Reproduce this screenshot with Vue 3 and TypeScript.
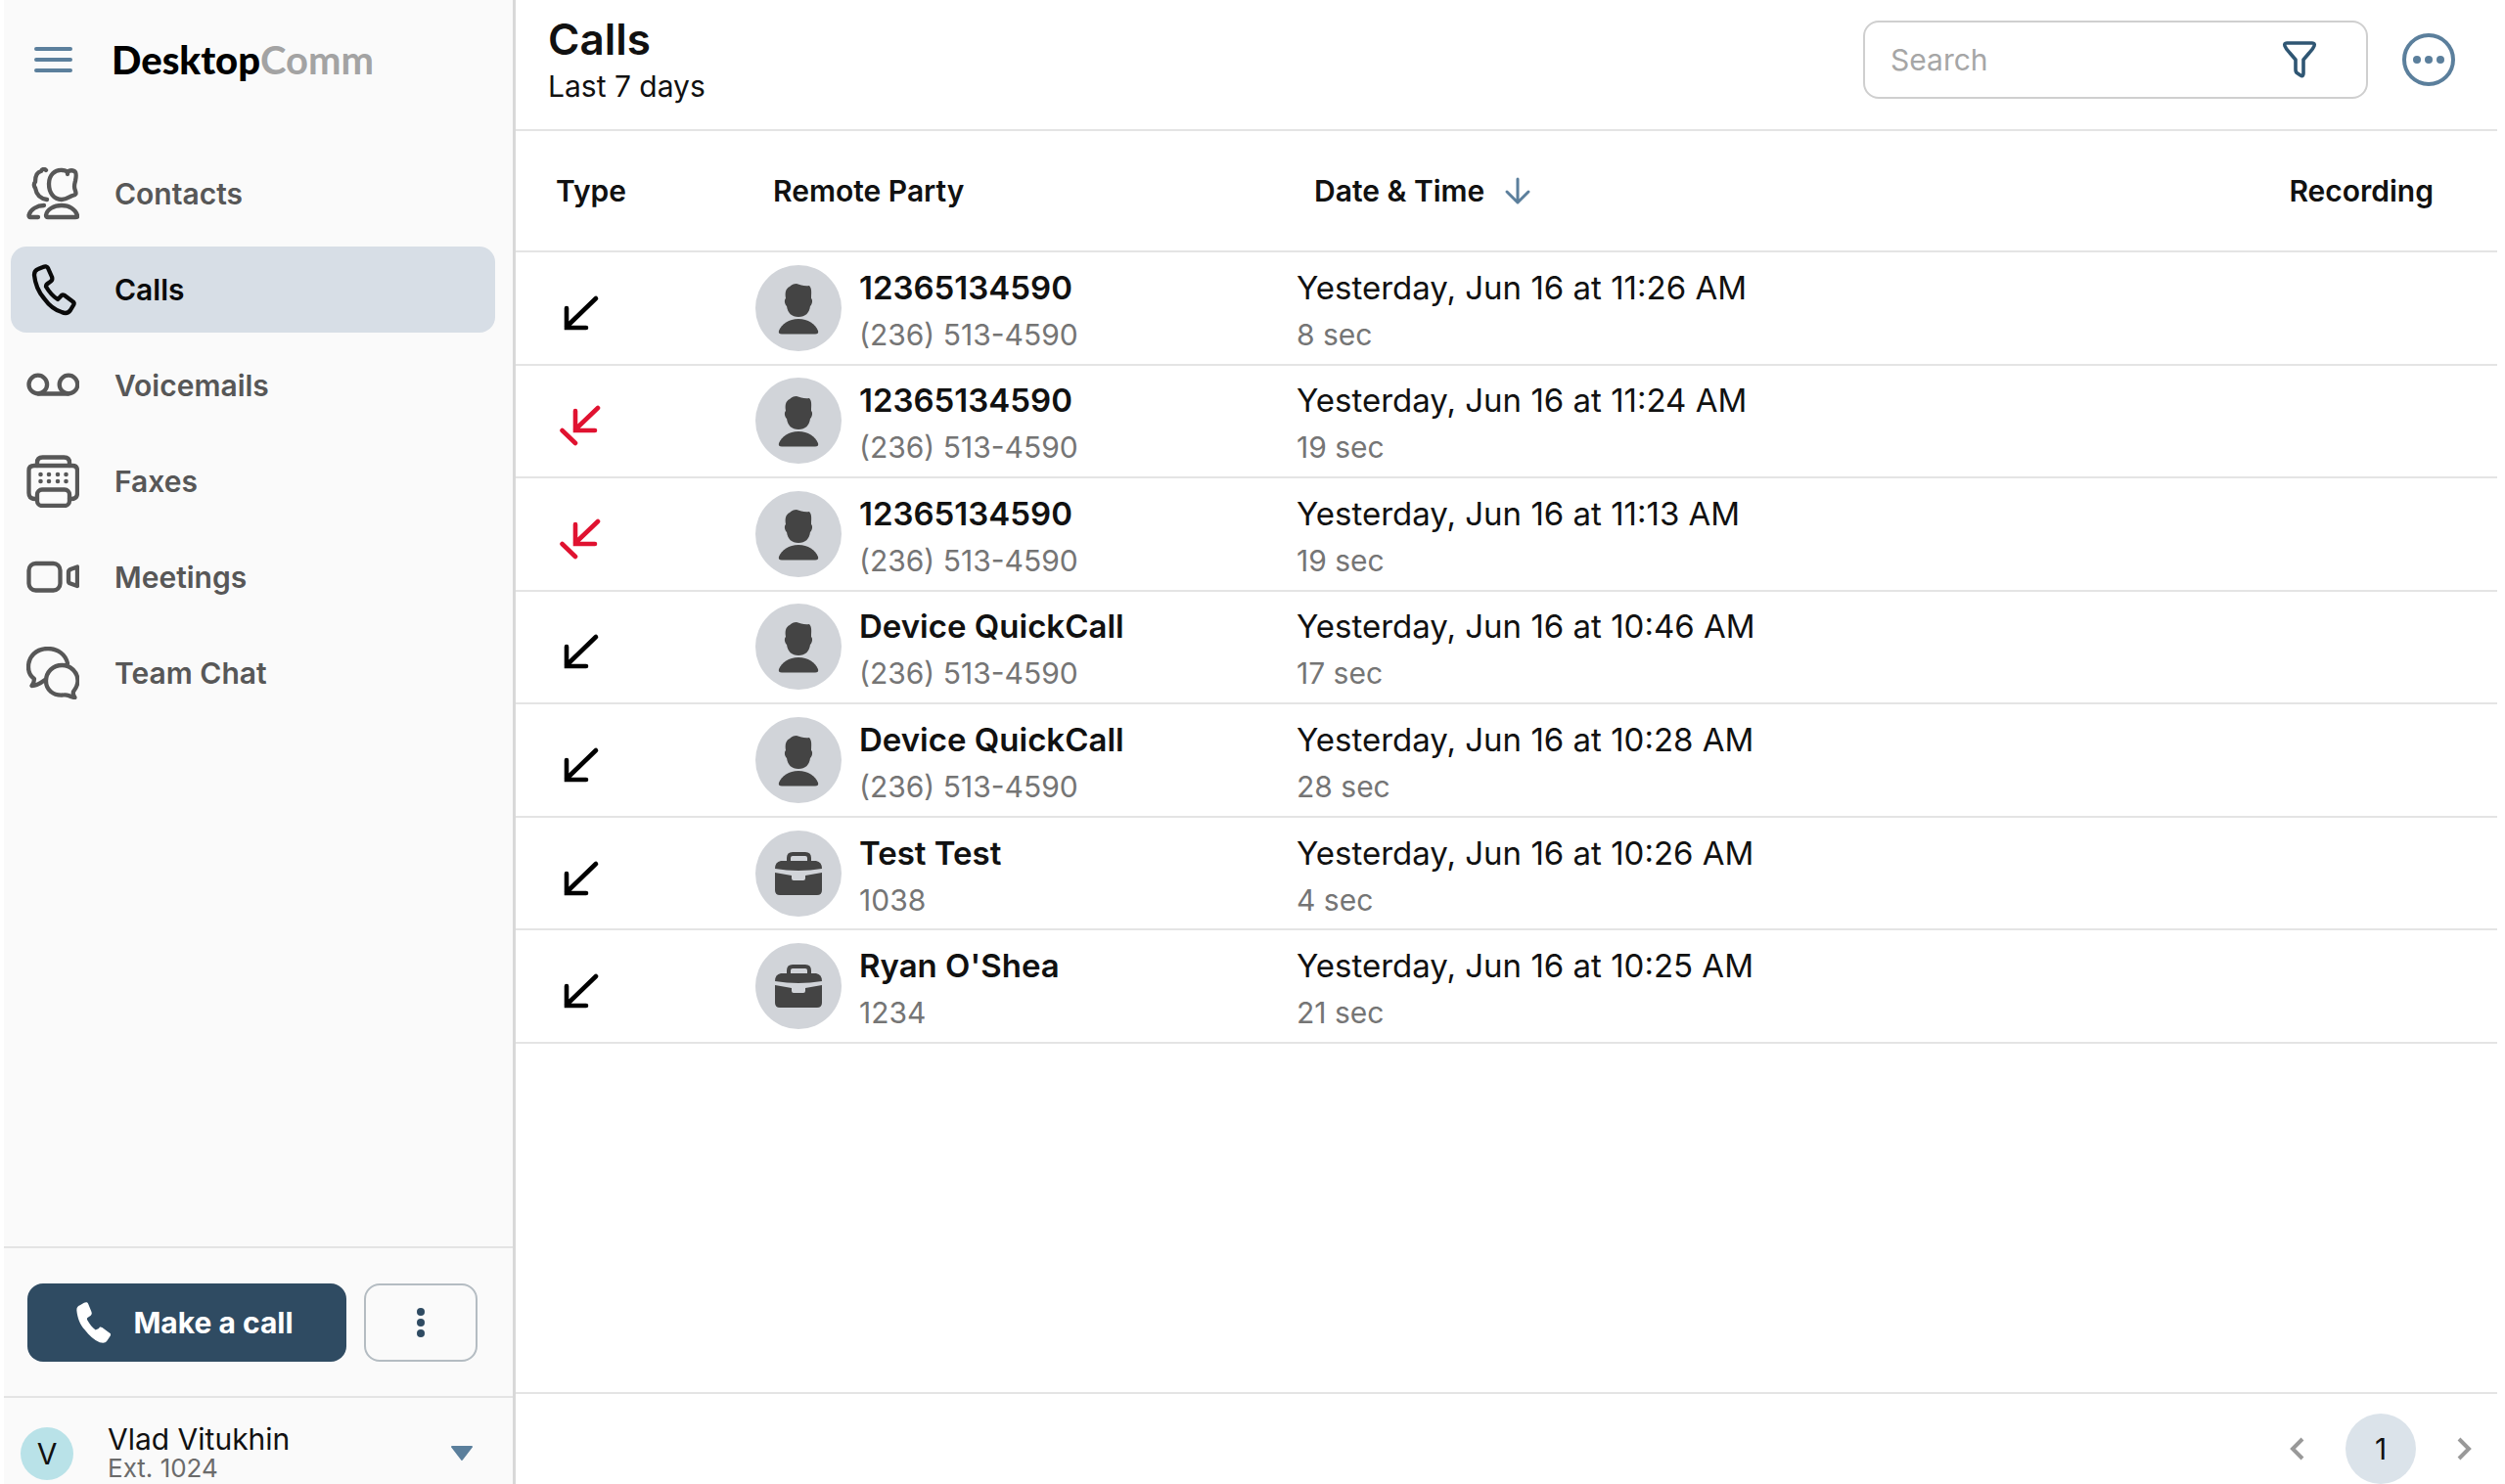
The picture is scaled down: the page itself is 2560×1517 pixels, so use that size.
<script setup lang="ts">
import { ref } from 'vue'

type Icon = 'contacts' | 'calls' | 'voicemails' | 'faxes' | 'meetings' | 'chat'

interface NavItem {
  icon: Icon
  label: string
}

interface Call {
  missed: boolean
  kind: 'person' | 'business'
  name: string
  number: string
  date: string
  duration: string
}

const nav: NavItem[] = [
  { icon: 'contacts', label: 'Contacts' },
  { icon: 'calls', label: 'Calls' },
  { icon: 'voicemails', label: 'Voicemails' },
  { icon: 'faxes', label: 'Faxes' },
  { icon: 'meetings', label: 'Meetings' },
  { icon: 'chat', label: 'Team Chat' },
]

const active = ref<Icon>('calls')
const query = ref('')

const calls: Call[] = [
  { missed: false, kind: 'person', name: '12365134590', number: '(236) 513-4590', date: 'Yesterday, Jun 16 at 11:26 AM', duration: '8 sec' },
  { missed: true, kind: 'person', name: '12365134590', number: '(236) 513-4590', date: 'Yesterday, Jun 16 at 11:24 AM', duration: '19 sec' },
  { missed: true, kind: 'person', name: '12365134590', number: '(236) 513-4590', date: 'Yesterday, Jun 16 at 11:13 AM', duration: '19 sec' },
  { missed: false, kind: 'person', name: 'Device QuickCall', number: '(236) 513-4590', date: 'Yesterday, Jun 16 at 10:46 AM', duration: '17 sec' },
  { missed: false, kind: 'person', name: 'Device QuickCall', number: '(236) 513-4590', date: 'Yesterday, Jun 16 at 10:28 AM', duration: '28 sec' },
  { missed: false, kind: 'business', name: 'Test Test', number: '1038', date: 'Yesterday, Jun 16 at 10:26 AM', duration: '4 sec' },
  { missed: false, kind: 'business', name: "Ryan O'Shea", number: '1234', date: 'Yesterday, Jun 16 at 10:25 AM', duration: '21 sec' },
]
</script>

<template>
  <div class="app">
    <aside class="sidebar">
      <div class="brand">
        <button class="bare" type="button" aria-label="Toggle menu">
          <svg width="42" height="28" viewBox="0 0 42 28" fill="none" stroke="#5b7f9c" stroke-width="4" stroke-linecap="round">
            <path d="M3 3H38M3 14H38M3 25H38" />
          </svg>
        </button>
        <span class="logo">Desktop<span class="logo-light">Comm</span></span>
      </div>

      <nav class="nav">
        <a
          v-for="item in nav"
          :key="item.icon"
          href="#"
          class="nav-item"
          :class="{ active: active === item.icon }"
          @click.prevent="active = item.icon"
        >
          <svg class="nav-icon" viewBox="0 0 54 54" fill="none" stroke="currentColor" stroke-width="4.300" stroke-linecap="round" stroke-linejoin="round">
            <template v-if="item.icon === 'contacts'">
              <path d="M37 3C29 2 23 8 23 17C23 26 28 33 36 33C41 33 44 30 47 29C51 28 51 27 50 24C48 20 49 18 50 14C51 9 51 5 49 4C47 3 44 3 42 5C41 4 39 3 37 3Z" />
              <path d="M42 5V7" />
              <path d="M20 3C18 1 16 2 15 4C10 5 9 9 9 15C7 17 8 20 9 21C10 27 14 32 21 33" />
              <path d="M18 39C11 39 4 43 2.500 49C2.500 51 3 51 4 51H12" />
              <path d="M36 39C28 39 21 43 20 49C20 51 21 51 22 51H50C52 51 52.500 51 52 49C50 43 44 39 36 39Z" />
            </template>
            <path
              v-else-if="item.icon === 'calls'"
              d="M17 4L12 6C9 7 8 9 8 12C9 22 12 29 18 36C23 43 29 48 36 50C40 52 43 51 45 48L48 43C49 41 49 40 47 39L39 33C37 32 36 32 35 34L32 37C27 34 23 29 20 24C20 22 21 21 23 20C26 18 27 17 26 14L22 5C21 3 19 3 17 4Z"
            />
            <template v-else-if="item.icon === 'voicemails'">
              <circle cx="11.800" cy="26" r="9.300" />
              <circle cx="43" cy="26" r="9.300" />
              <path d="M11.800 35.500H43" />
            </template>
            <template v-else-if="item.icon === 'faxes'">
              <path d="M11 11V8Q11 2.500 16.500 2.500H38.500Q44 2.500 44 8V11" />
              <path d="M11 45H9Q2.500 45 2.500 39V16Q2.500 11 8 11H47Q52 11 52 16V39Q52 45 46 45H44" />
              <rect x="11" y="35.500" width="33" height="16.500" rx="5" />
              <path d="M14.500 20V20M23 20V20M32 20V20M40.500 20V20M14.500 27V27M23 27V27M32 27V27M40.500 27V27" stroke-width="4.600" />
            </template>
            <template v-else-if="item.icon === 'meetings'">
              <rect x="2.500" y="13" width="32" height="27.500" rx="7" />
              <path d="M43 22Q43 20 45 19L52 16.500V36L45 33.500Q43 33 43 31Z" />
            </template>
            <template v-else>
              <path d="M42 17C40 8 32 2 22 2C10 2 2 10 2 21C2 27 4 30 8 33C8 36 7 38 5.500 40C10 40 15 37 19 34" />
              <path d="M48 46C51 42 52.500 39 52.500 35C52.500 26 45 19 36.500 19C27 19 20 26 20 35C20 44 27 50 37 49.500C40 49 41 49 43 50C45 51 47 52 49.500 52C48 50 47.500 48 48 46Z" />
            </template>
          </svg>
          <span>{{ item.label }}</span>
        </a>
      </nav>

      <div class="dial">
        <button class="make-call" type="button">
          <svg width="36" height="42" viewBox="8 2 42 50" fill="currentColor">
            <path d="M17 3L12 6C9 7 8 9 8 12C9 22 12 29 18 36C23 43 29 48 36 51C40 52 43 52 45 49L49 43C50 41 49 40 47 39L39 33C37 32 36 32 35 34L31 36C27 33 24 29 21 24C20 22 21 21 23 20C26 18 27 17 26 14L22 4C21 2 19 2 17 3Z" />
          </svg>
          <span>Make a call</span>
        </button>
        <button class="dial-more" type="button" aria-label="More call options">
          <svg width="10" height="32" viewBox="0 0 10 32" fill="#2f4b62">
            <circle cx="5" cy="5" r="4" />
            <circle cx="5" cy="16" r="4" />
            <circle cx="5" cy="27" r="4" />
          </svg>
        </button>
      </div>

      <button class="account" type="button">
        <span class="initial">V</span>
        <span class="account-text">
          <span class="account-name">Vlad Vitukhin</span>
          <span class="account-ext">Ext. 1024</span>
        </span>
        <svg width="24" height="18" viewBox="0 0 24 18" fill="#5b7f9c" stroke="#5b7f9c" stroke-width="2" stroke-linejoin="round">
          <path d="M2 2H22L12 15Z" />
        </svg>
      </button>
    </aside>

    <main class="main">
      <header class="topbar">
        <div class="heading">
          <h1>Calls</h1>
          <p>Last 7 days</p>
        </div>
        <div class="search">
          <input v-model="query" type="search" placeholder="Search" aria-label="Search calls" />
          <button class="bare" type="button" aria-label="Filter">
            <svg width="36" height="40" viewBox="0 0 36 40" fill="none" stroke="#2f5673" stroke-width="3.600" stroke-linejoin="round">
              <path d="M5 3H31Q34 3 33 6Q32 9 28 13L22 20V34Q22 38 19 36L16 34Q14 33 14 30V20L8 13Q4 9 3 6Q2 3 5 3Z" />
            </svg>
          </button>
        </div>
        <button class="bare" type="button" aria-label="More options">
          <svg width="56" height="56" viewBox="0 0 56 56" fill="none">
            <circle cx="28" cy="28" r="25" stroke="#5b7f9c" stroke-width="4" />
            <g fill="#5b7f9c">
              <circle cx="16" cy="28" r="4" />
              <circle cx="28" cy="28" r="4" />
              <circle cx="40" cy="28" r="4" />
            </g>
          </svg>
        </button>
      </header>

      <table class="calls">
        <colgroup>
          <col class="col-type" />
          <col class="col-party" />
          <col />
          <col class="col-rec" />
        </colgroup>
        <thead>
          <tr>
            <th class="th-type" scope="col">Type</th>
            <th scope="col">Remote Party</th>
            <th scope="col" aria-sort="descending">
              <button class="sort" type="button">
                Date &amp; Time
                <svg width="28" height="30" viewBox="0 0 28 30" fill="none" stroke="#5b7f9c" stroke-width="3" stroke-linecap="round" stroke-linejoin="round">
                  <path d="M14 3V27M3 16L14 27L25 16" />
                </svg>
              </button>
            </th>
            <th class="th-rec" scope="col">Recording</th>
          </tr>
        </thead>
        <tbody>
          <tr v-for="(call, i) in calls" :key="i">
            <td class="type">
              <svg v-if="call.missed" width="44" height="44" viewBox="0 0 44 44" fill="none" stroke="#e01230" stroke-width="4.600" stroke-linecap="round" role="img" aria-label="Missed call">
                <path d="M39 4L16 26M16 7V27H36M2.500 27L16 40" />
              </svg>
              <svg v-else width="44" height="44" viewBox="0 0 44 44" fill="none" stroke="#000" stroke-width="4.600" stroke-linecap="round" role="img" aria-label="Incoming call">
                <path d="M37 7L7 36M7 17V37H27" />
              </svg>
            </td>
            <td>
              <div class="party">
                <span class="avatar">
                  <svg v-if="call.kind === 'person'" width="88" height="88" viewBox="0 0 88 88" fill="#444">
                    <path d="M42 19C46 20 50 22 55 21C58 24 57 29 57 34C59 36 58 40 56 42C55 49 51 53 44 53C37 53 33 49 32 42C30 40 29 36 31 34C30 28 31 24 35 22C37 20 39 19 42 19Z" />
                    <path d="M44 55C54 55 61 60 64 67Q65 70.500 61 70.500H27Q23 70.500 24 67C27 60 34 55 44 55Z" />
                  </svg>
                  <svg v-else width="88" height="88" viewBox="0 0 88 88" fill="#444">
                    <path d="M34 33V28Q34 24 38 24H51Q55 24 55 28V33" fill="none" stroke="#444" stroke-width="4" />
                    <path d="M26 31H62Q68 32 68 39Q44 43 20 39Q20 32 26 31Z" />
                    <path d="M20 43L37 46V49Q37 51 39 51H49Q51 51 51 49V46L68 43V61Q68 66 63 66H25Q20 66 20 61Z" />
                  </svg>
                </span>
                <div class="lines">
                  <strong>{{ call.name }}</strong>
                  <small>{{ call.number }}</small>
                </div>
              </div>
            </td>
            <td>
              <div class="lines">
                <span>{{ call.date }}</span>
                <small>{{ call.duration }}</small>
              </div>
            </td>
            <td></td>
          </tr>
        </tbody>
      </table>

      <footer class="pager">
        <button class="bare" type="button" aria-label="Previous page">
          <svg width="18" height="26" viewBox="0 0 18 26" fill="none" stroke="#999" stroke-width="4"><path d="M15 3L5 13L15 23" /></svg>
        </button>
        <button class="page" type="button" aria-current="page">1</button>
        <button class="bare" type="button" aria-label="Next page">
          <svg width="18" height="26" viewBox="0 0 18 26" fill="none" stroke="#999" stroke-width="4"><path d="M3 3L13 13L3 23" /></svg>
        </button>
      </footer>
    </main>
  </div>
</template>

<style>
body {
  margin: 0;
  background: #fff;
}
</style>

<style scoped>
.app {
  display: flex;
  box-sizing: border-box;
  height: 100vh;
  padding: 0 8px 0 4px;
  overflow: hidden;
  font-family: Inter, 'Liberation Sans', sans-serif;
  font-size: 30px;
  line-height: 40px;
  color: #111;
}

button {
  font: inherit;
  color: inherit;
  cursor: pointer;
}

svg {
  display: block;
  flex: none;
}

.bare {
  padding: 0;
  border: 0;
  background: none;
}

.sidebar {
  display: flex;
  flex-direction: column;
  flex: none;
  width: 520px;
  border-right: 3px solid #d8d8d8;
  background: #fafafa;
}

.brand {
  display: flex;
  align-items: center;
  gap: 38px;
  height: 122px;
  padding-left: 30px;
}

.logo {
  font-family: Lato, sans-serif;
  font-size: 40px;
  font-weight: 900;
  color: #000;
}

.logo-light {
  font-weight: 700;
  color: #a3a3a3;
}

.nav {
  display: flex;
  flex-direction: column;
  gap: 10px;
  padding: 32px 18px 0 7px;
}

.nav-item {
  display: flex;
  align-items: center;
  gap: 36px;
  height: 88px;
  padding-left: 16px;
  border-radius: 16px;
  font-weight: 600;
  color: #575757;
  text-decoration: none;
}

.nav-item.active {
  background: #d7dee6;
  color: #0a0a0a;
}

.nav-icon {
  width: 54px;
  height: 54px;
}

.dial {
  display: flex;
  gap: 18px;
  margin-top: auto;
  padding: 36px 36px 35px 24px;
  border-top: 2px solid #e4e4e4;
}

.make-call {
  display: flex;
  align-items: center;
  justify-content: center;
  gap: 22px;
  flex: 1;
  height: 80px;
  padding: 0 4px 0 0;
  border: 0;
  border-radius: 16px;
  background: #2f4b62;
  font-weight: 700;
  color: #fff;
}

.dial-more {
  display: flex;
  align-items: center;
  justify-content: center;
  width: 116px;
  padding: 0;
  border: 2px solid #b4bcc2;
  border-radius: 16px;
  background: none;
}

.account {
  display: flex;
  align-items: center;
  height: 90px;
  padding: 26px 40px 0 17px;
  border: 0;
  border-top: 2px solid #e4e4e4;
  background: none;
  text-align: left;
}

.initial {
  width: 54px;
  height: 54px;
  margin-right: 35px;
  border-radius: 50%;
  background: #b9e2e8;
  line-height: 54px;
  text-align: center;
}

.account-text {
  display: flex;
  flex-direction: column;
  flex: 1;
  line-height: 30px;
}

.account-ext {
  font-size: 26px;
  color: #6b6b6b;
}

.main {
  display: flex;
  flex-direction: column;
  flex: 1;
  min-width: 0;
}

.topbar {
  display: flex;
  align-items: center;
  box-sizing: border-box;
  height: 134px;
  padding: 0 42px 10px 33px;
  border-bottom: 2px solid #e4e4e4;
}

.heading {
  flex: 1;
  padding-top: 4px;
}

h1 {
  margin: 0;
  font-size: 44px;
  font-weight: 600;
  line-height: 50px;
}

p {
  margin: 0;
  line-height: 46px;
}

.search {
  display: flex;
  align-items: center;
  box-sizing: border-box;
  width: 516px;
  height: 80px;
  margin-right: 34px;
  padding: 0 50px 0 26px;
  border: 2px solid #cfcfcf;
  border-radius: 16px;
}

.search input {
  flex: 1;
  min-width: 0;
  padding: 0;
  border: 0;
  outline: 0;
  background: none;
  font: inherit;
  color: inherit;
}

.search input::placeholder {
  color: #a6a6a6;
  opacity: 1;
}

.calls {
  width: 100%;
  height: 933px;
  border-collapse: separate;
  border-spacing: 0;
  table-layout: fixed;
}

.col-type {
  width: 245px;
}

.col-party {
  width: 553px;
}

.col-rec {
  width: 260px;
}

th {
  box-sizing: border-box;
  height: 124px;
  padding: 0 0 0 18px;
  border-bottom: 2px solid #e4e4e4;
  font-weight: 600;
  text-align: left;
}

.th-type {
  padding-left: 41px;
}

.th-rec {
  padding: 0 65px 0 0;
  text-align: right;
}

.sort {
  display: flex;
  align-items: center;
  gap: 20px;
  padding: 0;
  border: 0;
  background: none;
  font-weight: 600;
}

td {
  padding: 0;
  border-bottom: 2px solid #e4e4e4;
}

.type {
  padding: 10px 0 0 45px;
}

.party {
  display: flex;
  align-items: center;
  gap: 18px;
}

.avatar {
  border-radius: 50%;
  background: #d1d4d9;
}

.lines {
  display: flex;
  flex-direction: column;
  padding-top: 6px;
  font-size: 33px;
  line-height: 48px;
}

.lines strong {
  font-weight: 600;
}

.lines small {
  font-size: 30px;
  color: #757575;
}

.pager {
  display: flex;
  align-items: center;
  justify-content: flex-end;
  gap: 41px;
  box-sizing: border-box;
  height: 94px;
  margin-top: auto;
  padding: 20px 24px 0 0;
  border-top: 2px solid #e4e4e4;
}

.page {
  width: 72px;
  height: 72px;
  padding: 0;
  border: 0;
  border-radius: 50%;
  background: #dbe3ea;
}
</style>
